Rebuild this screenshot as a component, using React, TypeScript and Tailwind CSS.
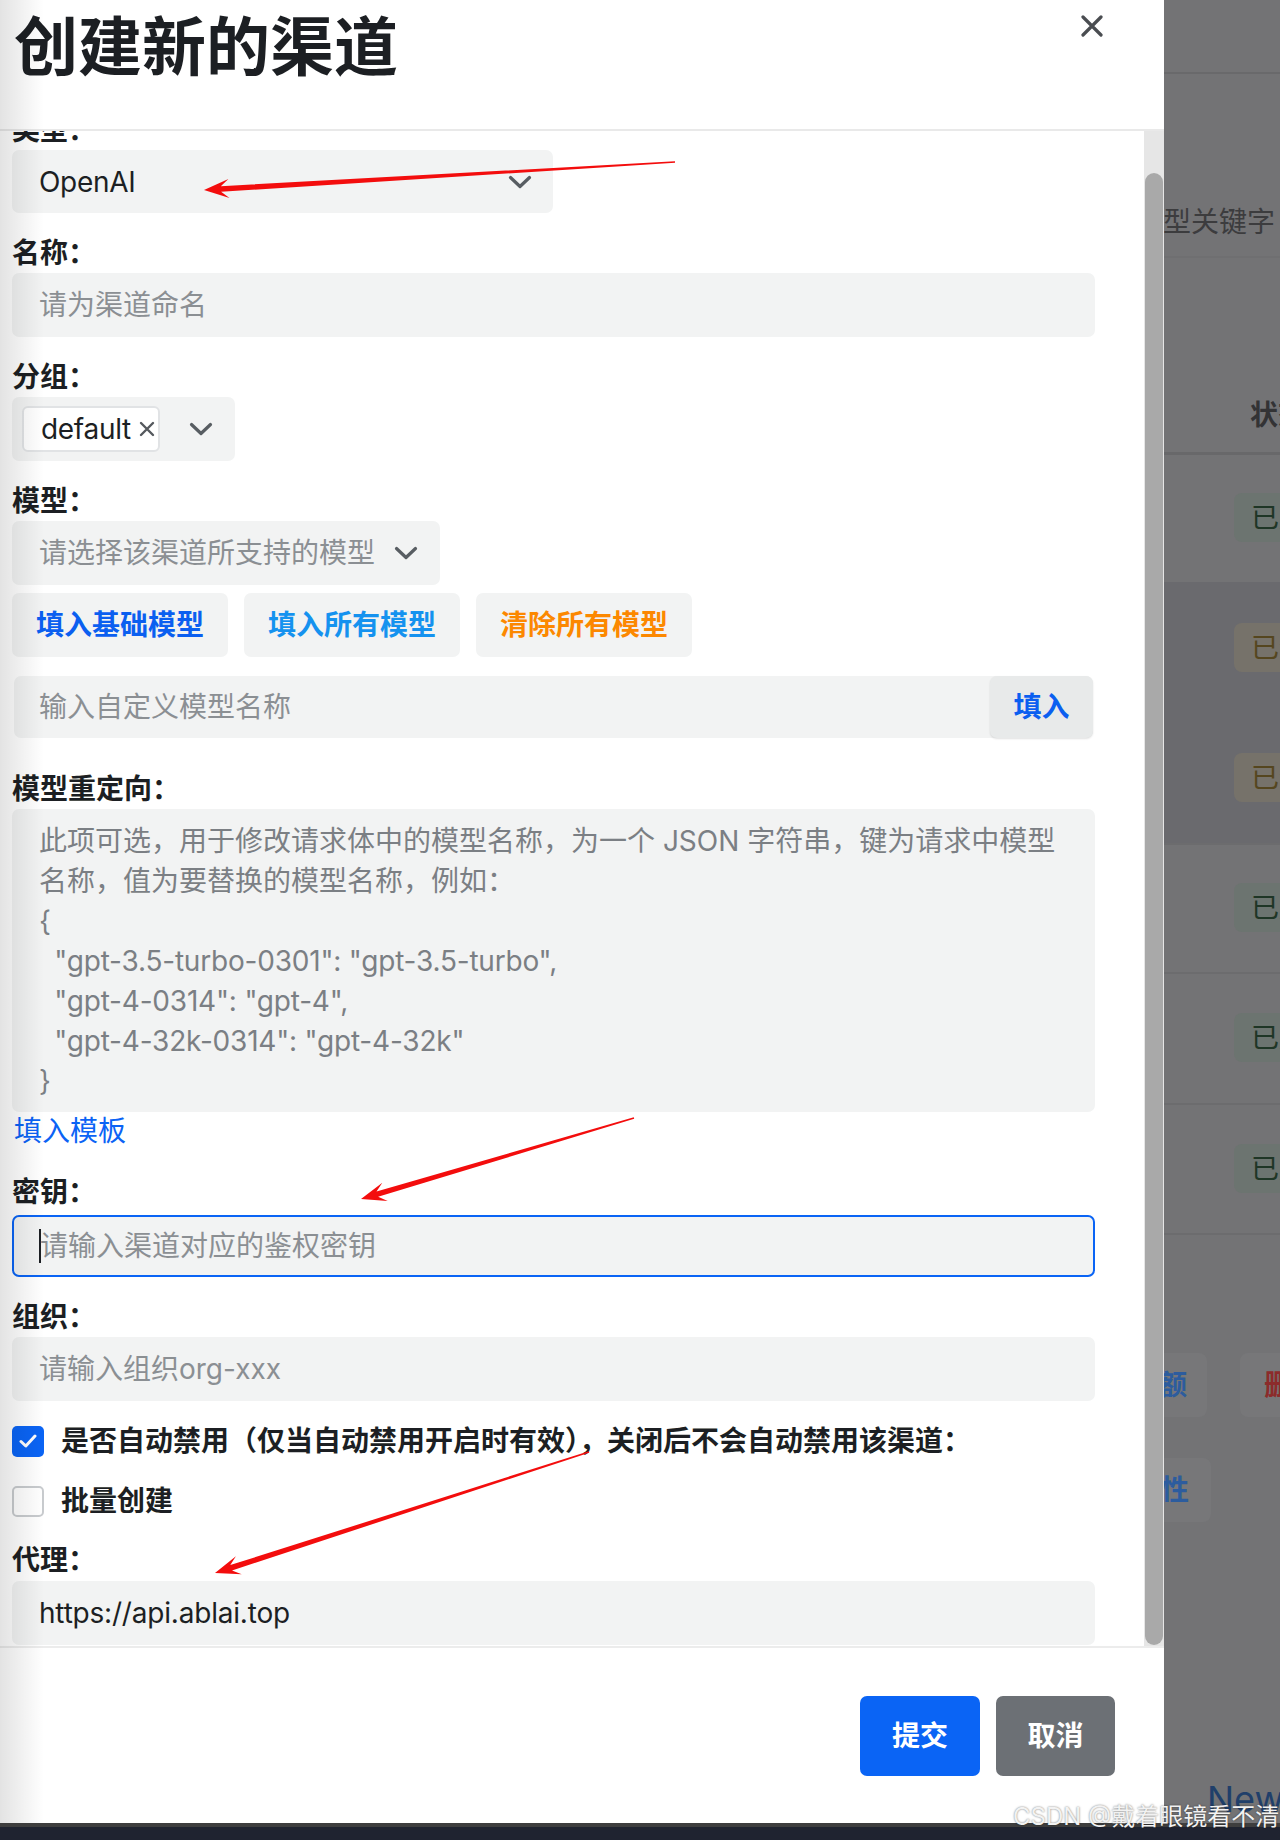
import React from "react";

const labelCls = "block h-[39px] leading-[39px] text-[28px] font-bold text-[#1c1f23] whitespace-nowrap";
const inputCls = "h-[64px] rounded-[7px] bg-[#f2f3f3] flex items-center px-[27px] text-[28px]";

function Chevron() {
  return (
    <svg width="24" height="14" viewBox="0 0 24 14" fill="none">
      <path d="M2.5 2.5L12 11.5L21.5 2.5" stroke="#585d62" strokeWidth="3.2" strokeLinecap="round" strokeLinejoin="round" />
    </svg>
  );
}

type Pt = [number, number];

function Arrow({ from, to }: { from: Pt; to: Pt }) {
  const dx = to[0] - from[0];
  const dy = to[1] - from[1];
  const len = Math.hypot(dx, dy);
  const ux = dx / len;
  const uy = dy / len;
  const nx = -uy;
  const ny = ux;
  const H = 25;
  const W = 9.5;
  const jx = to[0] - ux * (H - 8);
  const jy = to[1] - uy * (H - 8);
  const bx = to[0] - ux * H;
  const by = to[1] - uy * H;
  const p = (x: number, y: number) => `${x.toFixed(1)},${y.toFixed(1)}`;
  const pts = [
    p(from[0] + nx * 0.8, from[1] + ny * 0.8),
    p(jx + nx * 2.8, jy + ny * 2.8),
    p(bx + nx * W, by + ny * W),
    p(to[0], to[1]),
    p(bx - nx * W, by - ny * W),
    p(jx - nx * 2.8, jy - ny * 2.8),
    p(from[0] - nx * 0.8, from[1] - ny * 0.8),
  ].join(" ");
  return <polygon points={pts} fill="#f30d0d" />;
}

function Badge({ kind }: { kind: "on" | "off" }) {
  return kind === "on" ? (
    <div className="ml-[70px] h-[49px] w-[120px] rounded-[8px] bg-[#6c7470] pl-[17px] flex items-center text-[28px] text-[#1f3626] whitespace-nowrap">已启用</div>
  ) : (
    <div className="ml-[70px] h-[49px] w-[120px] rounded-[8px] bg-[#76726a] pl-[17px] flex items-center text-[28px] text-[#55461f] whitespace-nowrap">已禁用</div>
  );
}

export default function App() {
  return (
    <div className="relative w-[1280px] h-[1840px] overflow-hidden bg-[#1f2330] font-[Inter,'Noto_Sans_CJK_SC',sans-serif]">
      <div className="flex h-[1823px]">
        {/* modal */}
        <div className="w-[1164px] bg-white flex flex-col">
          <div className="h-[131px] border-b-2 border-[#e9e9e9] flex justify-between items-start">
            <h1 className="mt-[15px] ml-[14px] text-[64px] leading-[64px] font-bold text-[#1c1f23]">创建新的渠道</h1>
            <svg className="mt-[15px] mr-[61px]" width="22" height="22" viewBox="0 0 22 22" fill="none">
              <path d="M2 2L20 20M20 2L2 20" stroke="#4a4d51" strokeWidth="3.2" strokeLinecap="round" />
            </svg>
          </div>

          <div className="h-[1515px] flex">
            <div className="flex-1 overflow-hidden pl-[12px] pr-[49px]">
              <div className="-mt-[20px]">
                <span className={labelCls}>类型：</span>
                <div className="h-[63px] w-[541px] rounded-[7px] bg-[#f2f3f3] flex items-center justify-between pl-[27px] pr-[21px] text-[28px] tracking-[-0.3px] text-[#1c1f23]">
                  <span>OpenAI</span>
                  <Chevron />
                </div>

                <span className={`${labelCls} mt-[21px]`}>名称：</span>
                <div className={`${inputCls} text-[#8b8f93]`}>请为渠道命名</div>

                <span className={`${labelCls} mt-[21px]`}>分组：</span>
                <div className="h-[64px] w-[223px] rounded-[7px] bg-[#f2f3f3] flex items-center pl-[10px] pr-[22px] justify-between">
                  <div className="h-[46px] w-[138px] rounded-[6px] bg-white border-2 border-[#e1e3e5] flex items-center pl-[17px] gap-[8px] text-[28px] tracking-[-0.3px] text-[#1c1f23]">
                    <span>default</span>
                    <svg width="16" height="16" viewBox="0 0 16 16" fill="none">
                      <path d="M2 2L14 14M14 2L2 14" stroke="#55595e" strokeWidth="2.4" strokeLinecap="round" />
                    </svg>
                  </div>
                  <Chevron />
                </div>

                <span className={`${labelCls} mt-[21px]`}>模型：</span>
                <div className={`${inputCls} w-[428px] justify-between pr-[22px] text-[#8b8f93]`}>
                  <span>请选择该渠道所支持的模型</span>
                  <Chevron />
                </div>

                <div className="mt-[8px] flex gap-[16px]">
                  <button className="h-[64px] w-[216px] rounded-[7px] bg-[#f2f3f3] text-[28px] font-bold text-[#0b5ff0]">填入基础模型</button>
                  <button className="h-[64px] w-[216px] rounded-[7px] bg-[#f2f3f3] text-[28px] font-bold text-[#1592ef]">填入所有模型</button>
                  <button className="h-[64px] w-[216px] rounded-[7px] bg-[#f2f3f3] text-[28px] font-bold text-[#fc8800]">清除所有模型</button>
                </div>

                <div className="mt-[19px] mx-[2px] h-[62px] flex rounded-[7px] bg-[#f2f3f3]">
                  <div className="flex-1 flex items-center pl-[25px] text-[28px] text-[#8b8f93]">输入自定义模型名称</div>
                  <button className="w-[103px] h-[62px] rounded-[7px] bg-[#e8eaea] shadow-[0_1px_2px_rgba(0,0,0,0.12)] text-[28px] font-bold text-[#0b5ff0]">填入</button>
                </div>

                <span className={`${labelCls} mt-[32px]`}>模型重定向：</span>
                <div className="h-[303px] rounded-[7px] bg-[#f2f3f3] pl-[27px] pt-[12px] text-[28px] leading-[40px] text-[#7b7f84] whitespace-pre">
                  <div>此项可选，用于修改请求体中的模型名称，为一个 JSON 字符串，键为请求中模型</div>
                  <div>名称，值为要替换的模型名称，例如：</div>
                  <div>{"{"}</div>
                  <div className="tracking-[-0.2px]">{'  "gpt-3.5-turbo-0301": "gpt-3.5-turbo",'}</div>
                  <div className="tracking-[-0.2px]">{'  "gpt-4-0314": "gpt-4",'}</div>
                  <div className="tracking-[-0.2px]">{'  "gpt-4-32k-0314": "gpt-4-32k"'}</div>
                  <div>{"}"}</div>
                </div>
                <span className="block h-[39px] leading-[39px] pl-[2px] text-[28px] text-[#0b63f5]">填入模板</span>

                <span className={`${labelCls} mt-[22px]`}>密钥：</span>
                <div className="mt-[3px] h-[62px] rounded-[7px] bg-[#f2f3f3] border-2 border-[#0a64f5] flex items-center pl-[25px] text-[28px] text-[#8b8f93]">
                  <span className="w-[2px] h-[34px] bg-[#1c1f23] -mr-[1px]" />
                  <span>请输入渠道对应的鉴权密钥</span>
                </div>

                <span className={`${labelCls} mt-[21px]`}>组织：</span>
                <div className={`${inputCls} text-[#8b8f93]`}>请输入组织org-xxx</div>

                <div className="mt-[20px] h-[40px] flex items-center gap-[17px]">
                  <div className="w-[32px] h-[31px] rounded-[5px] bg-[#0a64f5] flex items-center justify-center">
                    <svg width="18" height="14" viewBox="0 0 18 14" fill="none">
                      <path d="M2 7.5L6.8 12L16 2" stroke="white" strokeWidth="3" strokeLinecap="round" strokeLinejoin="round" />
                    </svg>
                  </div>
                  <span className="text-[28px] font-bold text-[#1c1f23] whitespace-nowrap">是否自动禁用（仅当自动禁用开启时有效），关闭后不会自动禁用该渠道：</span>
                </div>

                <div className="mt-[20px] h-[40px] flex items-center gap-[17px]">
                  <div className="w-[32px] h-[31px] rounded-[5px] bg-white border-2 border-[#c8cbce]" />
                  <span className="text-[28px] font-bold text-[#1c1f23]">批量创建</span>
                </div>

                <span className={`${labelCls} mt-[20px]`}>代理：</span>
                <div className={`${inputCls} mt-[1px] text-[#1c1f23] tracking-[-0.2px]`}>https://api.ablai.top</div>
              </div>
            </div>
            <div className="w-[20px] bg-[#e6e6e6] pt-[42px]">
              <div className="mx-[1px] h-[1472px] rounded-full bg-[#a9a9a9]" />
            </div>
          </div>

          <div className="flex-1 border-t-2 border-[#ececec] flex justify-end items-start pt-[48px] pr-[49px] gap-[16px]">
            <button className="w-[120px] h-[80px] rounded-[7px] bg-[#0a64f5] text-[28px] font-bold text-white">提交</button>
            <button className="w-[119px] h-[80px] rounded-[7px] bg-[#6c7075] text-[28px] font-bold text-white">取消</button>
          </div>
        </div>

        {/* dimmed page behind the modal */}
        <div className="flex-1 overflow-hidden bg-[#737375] flex flex-col">
          <div className="h-[72px] shrink-0" />
          <div className="h-[2px] shrink-0 bg-[#69696b]" />
          <div className="h-[118px] shrink-0" />
          <div className="h-[64px] shrink-0 -ml-[29px] pt-[5px] leading-[50px] text-[28px] text-[#3c3c3e] whitespace-nowrap">模型关键字</div>
          <div className="h-[2px] shrink-0 bg-[#6f6f71]" />
          <div className="h-[194px] shrink-0 pt-[137px] pl-[86px] text-[28px] leading-[40px] font-bold text-[#333335] whitespace-nowrap">状态</div>
          <div className="h-[3px] shrink-0 bg-[#68686a]" />
          <div className="h-[127px] shrink-0 pt-[38px]"><Badge kind="on" /></div>
          <div className="h-[261px] shrink-0 bg-[#6a6a6e] flex flex-col">
            <div className="h-[131px] pt-[41px]"><Badge kind="off" /></div>
            <div className="h-[130px] pt-[40px]"><Badge kind="off" /></div>
          </div>
          <div className="h-[2px] shrink-0 bg-[#6c6c6e]" />
          <div className="h-[127px] shrink-0 pt-[38px]"><Badge kind="on" /></div>
          <div className="h-[2px] shrink-0 bg-[#6c6c6e]" />
          <div className="h-[129px] shrink-0 pt-[39px]"><Badge kind="on" /></div>
          <div className="h-[2px] shrink-0 bg-[#6c6c6e]" />
          <div className="h-[128px] shrink-0 pt-[39px]"><Badge kind="on" /></div>
          <div className="h-[2px] shrink-0 bg-[#6c6c6e]" />
          <div className="h-[118px] shrink-0" />
          <div className="h-[64px] shrink-0 flex">
            <div className="-ml-[33px] w-[76px] h-[64px] shrink-0 rounded-r-[8px] bg-[#777779] flex items-center text-[28px] font-bold text-[#2c5c9e] whitespace-nowrap">余额</div>
            <div className="ml-[33px] w-[60px] h-[64px] shrink-0 rounded-l-[8px] bg-[#777779] pl-[24px] flex items-center text-[28px] font-bold text-[#8c2b2b] whitespace-nowrap">删除</div>
          </div>
          <div className="h-[41px] shrink-0" />
          <div className="h-[64px] shrink-0 flex">
            <div className="-ml-[31px] w-[78px] h-[64px] shrink-0 rounded-r-[8px] bg-[#777779] flex items-center text-[28px] font-bold text-[#2c5c9e] whitespace-nowrap">属性</div>
          </div>
          <div className="h-[266px] shrink-0 pl-[43px] pt-[262px] text-[36px] leading-[30px] text-[#203f6a] whitespace-nowrap">New</div>
        </div>
      </div>

      <div className="h-[4px] bg-[#3e3e3e]" />

      {/* left edge shadow */}
      <div className="absolute left-0 top-0 h-[1823px] w-[44px] bg-linear-to-r from-black/[0.11] to-transparent pointer-events-none" />

      {/* annotation arrows */}
      <svg className="absolute left-0 top-0 pointer-events-none" width="1280" height="1840" viewBox="0 0 1280 1840">
        <Arrow from={[675, 162]} to={[204, 190]} />
        <Arrow from={[634, 1118]} to={[361, 1199]} />
        <Arrow from={[589, 1452]} to={[215, 1573]} />
      </svg>

      {/* watermark */}
      <div className="absolute left-[1013px] top-[1802px] text-[24px] leading-[30px] text-[#f2f2f2] whitespace-nowrap [text-shadow:0_0_2px_rgba(0,0,0,0.55)]">CSDN @戴着眼镜看不清</div>
    </div>
  );
}
